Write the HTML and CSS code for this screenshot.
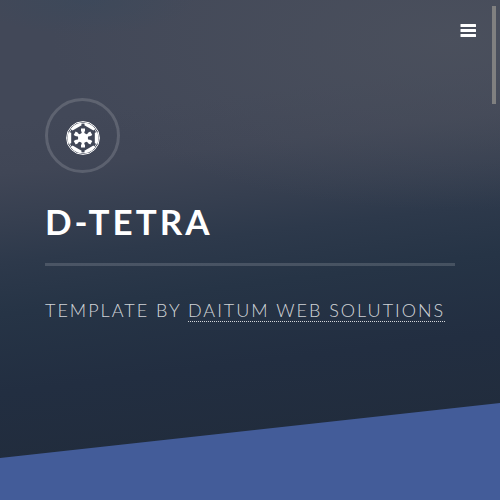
FILE: index.html
```html
<!DOCTYPE html>
<html lang="en">
<head>
<meta charset="utf-8">
<meta name="viewport" content="width=device-width, initial-scale=1">
<title>D-Tetra</title>
<link rel="stylesheet" href="styles.css">
</head>
<body>
<header class="topbar">
  <button class="menu-button" type="button" aria-label="Menu">
    <svg class="menu-icon" viewBox="0 0 16 14" aria-hidden="true">
      <rect x=".5" width="15.5" height="3" rx=".5"/>
      <rect x=".5" y="5" width="15.5" height="3" rx=".5"/>
      <rect x=".5" y="10" width="15.5" height="3" rx=".5"/>
    </svg>
  </button>
</header>
<main class="banner">
  <div class="logo">
    <svg class="logo-icon" viewBox="-17 -17 34 34" aria-hidden="true">
      <defs>
        <path id="spoke" d="M-1.8 0L-1.3 -6L-2 -7V-9.6H2V-7L1.3 -6L1.8 0Z"/>
        <path id="plate" d="M14.2 -6A15.4 15.4 0 0 1 14.2 6L11.8 5.2V-5.2Z"/>
      </defs>
      <circle class="ring" r="16.4"/>
      <circle class="ring ring-inner" r="14.8"/>
      <circle r="5"/>
      <g>
        <use href="#spoke"/>
        <use href="#spoke" transform="rotate(60)"/>
        <use href="#spoke" transform="rotate(120)"/>
        <use href="#spoke" transform="rotate(180)"/>
        <use href="#spoke" transform="rotate(240)"/>
        <use href="#spoke" transform="rotate(300)"/>
      </g>
      <g>
        <use href="#plate"/>
        <use href="#plate" transform="rotate(60)"/>
        <use href="#plate" transform="rotate(120)"/>
        <use href="#plate" transform="rotate(180)"/>
        <use href="#plate" transform="rotate(240)"/>
        <use href="#plate" transform="rotate(300)"/>
      </g>
    </svg>
  </div>
  <h1 class="title">D-TETRA</h1>
  <p class="tagline">TEMPLATE BY <a class="credit" href="#">DAITUM WEB SOLUTIONS</a></p>
</main>
<section class="spotlight"></section>
<div class="scroll-thumb"></div>
</body>
</html>
```
FILE: styles.css
```css
* {
  box-sizing: border-box;
}

body {
  margin: 0;
  min-height: 100vh;
  display: flex;
  flex-direction: column;
  color: #fff;
  font-family: Lato, "Open Sans", sans-serif;
  background:
    radial-gradient(ellipse 22% 7% at 17% 0, rgba(56, 73, 92, .5), transparent),
    radial-gradient(ellipse 80% 34% at 90% 8%, rgba(77, 82, 94, .75), transparent),
    linear-gradient(173deg, #424858 0%, #424858 22%, #404656 31%, #363f50 40%, #2d394b 47%, #263446 56%, #222e41 70%, #212c3c 86%, #212c3c 100%);
}

.topbar {
  display: flex;
  justify-content: flex-end;
  padding: 16px 16px 0;
}

.menu-button {
  display: flex;
  padding: 8px;
  border: 0;
  background: none;
  cursor: pointer;
}

.menu-icon {
  width: 16px;
  height: 14px;
  fill: #fff;
}

.banner {
  flex: 1;
  padding: 52px 9% 64px;
}

.logo {
  display: flex;
  align-items: center;
  justify-content: center;
  width: 75px;
  height: 75px;
  padding-top: 4px;
  border: 3px solid rgba(255, 255, 255, .15);
  border-radius: 50%;
}

.logo-icon {
  width: 34px;
  height: 34px;
  fill: #fff;
}

.ring {
  fill: none;
  stroke: #fff;
  stroke-width: 1;
}

.ring-inner {
  stroke-width: .8;
}

.title {
  margin: 25px 0 32px;
  padding-bottom: 19px;
  border-bottom: 3px solid rgba(255, 255, 255, .15);
  font-size: 35px;
  line-height: 46px;
  font-weight: 700;
  letter-spacing: 3px;
}

.tagline {
  margin: 0;
  color: rgba(255, 255, 255, .8);
  font-size: 18px;
  line-height: 24px;
  font-weight: 300;
  letter-spacing: 2px;
}

.credit {
  color: inherit;
  text-decoration: none;
  border-bottom: 1px dotted;
}

.spotlight {
  height: 97px;
  background: #435c99;
  clip-path: polygon(0 11vw, 100% 0, 100% 100%, 0 100%);
}

.scroll-thumb {
  position: fixed;
  top: 6px;
  right: 4px;
  width: 4px;
  height: 98px;
  background: #808080;
}
```
